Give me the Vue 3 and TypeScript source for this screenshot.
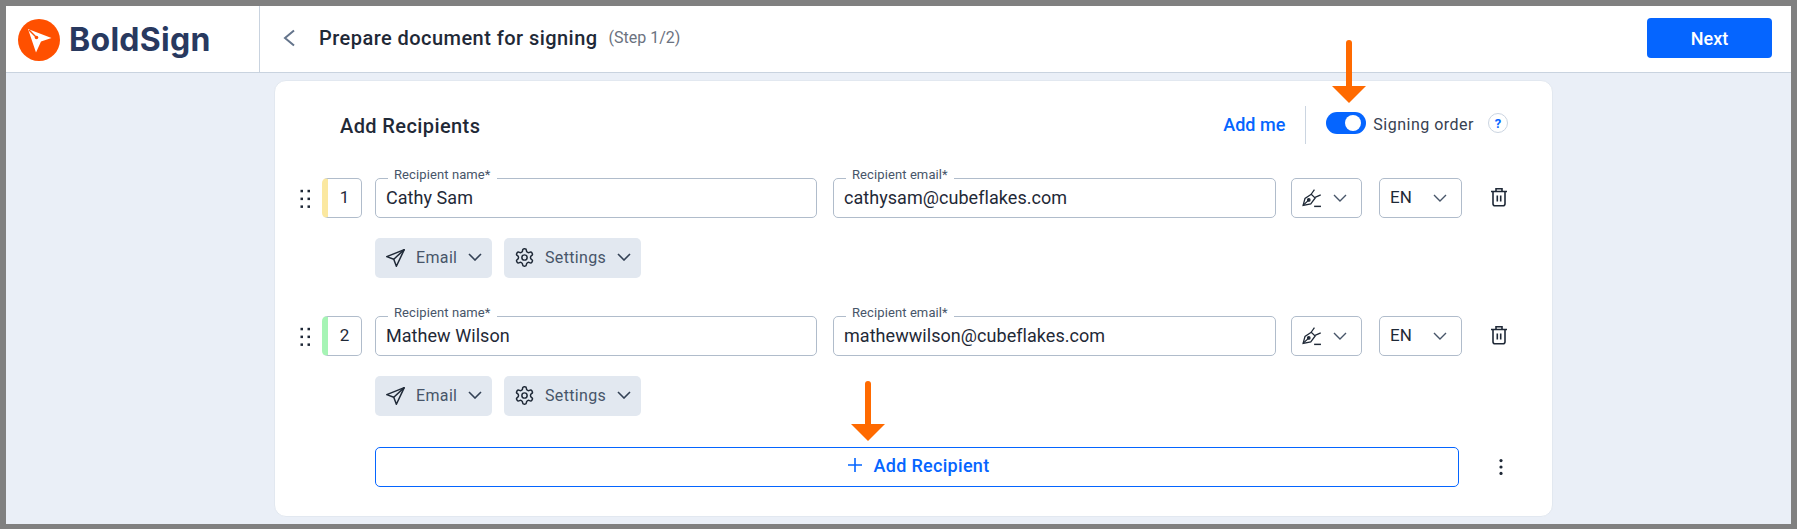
<script setup lang="ts">
interface Recipient {
  order: number
  name: string
  email: string
  accent: string
}

const recipients: Recipient[] = [
  { order: 1, name: 'Cathy Sam', email: 'cathysam@cubeflakes.com', accent: '#fbe8a0' },
  { order: 2, name: 'Mathew Wilson', email: 'mathewwilson@cubeflakes.com', accent: '#a6f4b5' },
]
const gearPath =
  'M12.22 2h-.44a2 2 0 0 0-2 2v.18a2 2 0 0 1-1 1.73l-.43.25a2 2 0 0 1-2 0l-.15-.08a2 2 0 0 0-2.73.73l-.22.38a2 2 0 0 0 .73 2.73l.15.1a2 2 0 0 1 1 1.72v.51a2 2 0 0 1-1 1.74l-.15.09a2 2 0 0 0-.73 2.73l.22.38a2 2 0 0 0 2.73.73l.15-.08a2 2 0 0 1 2 0l.43.25a2 2 0 0 1 1 1.73V20a2 2 0 0 0 2 2h.44a2 2 0 0 0 2-2v-.18a2 2 0 0 1 1-1.73l.43-.25a2 2 0 0 1 2 0l.15.08a2 2 0 0 0 2.73-.73l.22-.39a2 2 0 0 0-.73-2.73l-.15-.08a2 2 0 0 1-1-1.74v-.5a2 2 0 0 1 1-1.74l.15-.09a2 2 0 0 0 .73-2.73l-.22-.38a2 2 0 0 0-2.73-.73l-.15.08a2 2 0 0 1-2 0l-.43-.25a2 2 0 0 1-1-1.73V4a2 2 0 0 0-2-2z'
</script>

<template>
  <div class="frame">
    <header class="topbar">
      <div class="brand">
        <svg class="logo" width="42" height="42" viewBox="0 0 42 42">
          <circle cx="21" cy="21" r="21" fill="#ff5000" />
          <path d="M10 10 33.5 19 23 22.5 18 33.5Z" fill="#fff" />
          <path d="M11 11 18 18" stroke="#ff5000" stroke-width="1.4" />
          <circle cx="18.5" cy="18.5" r="1.8" fill="#ff5000" />
        </svg>
        <span class="wordmark">BoldSign</span>
      </div>
      <div class="title-area">
        <svg class="back" width="14" height="18" viewBox="0 0 14 18" fill="none">
          <path d="M12 1.5 3 9l9 7.5" stroke="#64748b" stroke-width="2" />
        </svg>
        <h1 class="title">Prepare document for signing</h1>
        <span class="step">(Step 1/2)</span>
      </div>
      <button class="next">Next</button>
    </header>

    <main class="content">
      <section class="card">
        <div class="card-head">
          <h2 class="card-title">Add Recipients</h2>
          <a class="add-me">Add me</a>
          <span class="divider"></span>
          <span class="toggle"><span class="knob"></span></span>
          <span class="order-label">Signing order</span>
          <span class="help">?</span>
        </div>

        <div v-for="r in recipients" :key="r.order" class="recipient">
          <div class="row">
            <svg class="drag" width="10" height="20" viewBox="0 0 10 20">
              <g fill="#1f2937">
                <rect x="0.5" y="1.8" width="2.5" height="2.5" />
                <rect x="7.5" y="1.8" width="2.5" height="2.5" />
                <rect x="0.5" y="9.6" width="2.5" height="2.5" />
                <rect x="7.5" y="9.6" width="2.5" height="2.5" />
                <rect x="0.5" y="17.4" width="2.5" height="2.5" />
                <rect x="7.5" y="17.4" width="2.5" height="2.5" />
              </g>
            </svg>
            <div class="num" :style="{ borderLeftColor: r.accent }">{{ r.order }}</div>
            <label class="field name-field">
              <span class="legend">Recipient name*</span>
              <span class="value">{{ r.name }}</span>
            </label>
            <label class="field email-field">
              <span class="legend">Recipient email*</span>
              <span class="value">{{ r.email }}</span>
            </label>
            <div class="select sign">
              <svg width="21" height="21" viewBox="0 0 20 20" fill="none" stroke="#1f2937" stroke-width="1.2">
                <path d="M2 16.5 3.8 10 9.8 6l3.7 3.5-4.2 5.6z" />
                <path d="M2 16.5 6.8 12" />
                <circle cx="7.4" cy="11.4" r="1.2" fill="#1f2937" />
                <path d="M9.5 6.2 12.8 1.5M13.4 9l5.4-2.4" />
                <path d="M12.5 17.5h6.5" stroke-width="1.4" />
              </svg>
              <svg class="chev" width="14" height="8" viewBox="0 0 14 8" fill="none">
                <path d="m1 1 6 6 6-6" stroke="#475569" stroke-width="1.4" />
              </svg>
            </div>
            <div class="select lang">
              <span class="lang-text">EN</span>
              <svg class="chev" width="14" height="8" viewBox="0 0 14 8" fill="none">
                <path d="m1 1 6 6 6-6" stroke="#475569" stroke-width="1.4" />
              </svg>
            </div>
            <svg class="trash" width="18" height="20" viewBox="0 0 18 20" fill="none" stroke="#1f2937" stroke-width="1.6">
              <path d="M1 4.5h16M6 4.5V1.8h6v2.7" />
              <path d="M3 4.5v12.2a2 2 0 0 0 2 2h8a2 2 0 0 0 2-2V4.5" />
              <path d="M7.3 8.5v6M10.7 8.5v6" />
            </svg>
          </div>
          <div class="chips">
            <button class="chip email-chip">
              <svg width="21" height="21" viewBox="0 0 24 24" fill="none" stroke="#1f2937" stroke-width="1.7" stroke-linejoin="round">
                <path d="M22 3 2 11l8 3 3 8z" />
                <path d="M22 3 10 14" />
              </svg>
              <span class="chip-text">Email</span>
              <svg width="14" height="8" viewBox="0 0 14 8" fill="none">
                <path d="m1 1 6 6 6-6" stroke="#334155" stroke-width="1.6" />
              </svg>
            </button>
            <button class="chip settings-chip">
              <svg width="21" height="21" viewBox="0 0 24 24" fill="none" stroke="#1f2937" stroke-width="1.7">
                <path :d="gearPath" />
                <circle cx="12" cy="12" r="3" />
              </svg>
              <span class="chip-text">Settings</span>
              <svg width="14" height="8" viewBox="0 0 14 8" fill="none">
                <path d="m1 1 6 6 6-6" stroke="#334155" stroke-width="1.6" />
              </svg>
            </button>
          </div>
        </div>

        <div class="add-row">
          <button class="add-recipient">
            <svg width="16" height="16" viewBox="0 0 16 16" fill="none">
              <path d="M8 1v14M1 8h14" stroke="#0565ff" stroke-width="1.6" />
            </svg>
            <span>Add Recipient</span>
          </button>
          <svg class="more" width="4" height="16" viewBox="0 0 4 16">
            <g fill="#1f2937">
              <circle cx="2" cy="1.6" r="1.6" />
              <circle cx="2" cy="8" r="1.6" />
              <circle cx="2" cy="14.4" r="1.6" />
            </g>
          </svg>
        </div>
      </section>
    </main>

    <svg class="arrow arrow-toggle" width="34" height="63" viewBox="0 0 34 63">
      <path d="M17 3v44" stroke="#ff6a00" stroke-width="6" stroke-linecap="round" />
      <path d="M0 46h34L17 63z" fill="#ff6a00" />
    </svg>
    <svg class="arrow arrow-add" width="34" height="60" viewBox="0 0 34 60">
      <path d="M17 3v41" stroke="#ff6a00" stroke-width="6" stroke-linecap="round" />
      <path d="M0 43h34L17 60z" fill="#ff6a00" />
    </svg>
  </div>
</template>

<style scoped>
.frame {
  position: relative;
  box-sizing: border-box;
  width: 1797px;
  height: 529px;
  border: solid #808080;
  border-width: 6px 6px 5px 6px;
  background: #eaeff7;
  font-family: Roboto, "Liberation Sans", sans-serif;
  color: #1f2937;
  overflow: hidden;
}
.topbar {
  display: flex;
  align-items: center;
  height: 66px;
  background: #fff;
  border-bottom: 1px solid #c9d3df;
}
.brand {
  display: flex;
  align-items: center;
  gap: 9px;
  box-sizing: border-box;
  width: 254px;
  height: 100%;
  padding-left: 12px;
  border-right: 1px solid #c9d3df;
}
.logo {
  margin-top: 2px;
}
.wordmark {
  font-family: Inter, "Liberation Sans", sans-serif;
  font-size: 32px;
  font-weight: 700;
  letter-spacing: 0.3px;
  color: #28395f;
}
.title-area {
  display: flex;
  align-items: center;
  flex: 1;
  height: 100%;
  box-sizing: border-box;
  padding: 0 0 3px 22px;
}
.back {
  margin-right: 23px;
}
.title {
  margin: 0;
  font-size: 20px;
  font-weight: 500;
  letter-spacing: 0.45px;
  color: #1f2937;
}
.step {
  margin-left: 11px;
  font-size: 16px;
  color: #6b7280;
}
.next {
  width: 125px;
  height: 40px;
  margin: 0 19px 2px 0;
  padding-bottom: 1px;
  border: 0;
  border-radius: 4px;
  background: #0565ff;
  color: #fff;
  font: 500 18px Roboto, sans-serif;
}
.content {
  padding: 7px 0 0 268px;
}
.card {
  box-sizing: border-box;
  width: 1279px;
  height: 437px;
  padding-top: 25px;
  background: #fff;
  border: 1px solid #e2e8f0;
  border-radius: 12px;
}
.card-head {
  display: flex;
  align-items: center;
  height: 38px;
  padding-left: 65px;
}
.card-title {
  flex: 1;
  margin: 1px 0 0;
  font-size: 20px;
  font-weight: 500;
  letter-spacing: 0.4px;
  color: #1f2937;
}
.add-me {
  margin-bottom: 2px;
  color: #0565ff;
  font-size: 18px;
  font-weight: 500;
}
.divider {
  width: 1px;
  height: 38px;
  margin: 0 20px 0 20px;
  background: #cbd5e1;
}
.toggle {
  position: relative;
  width: 40px;
  height: 22px;
  margin-bottom: 4px;
  border-radius: 11px;
  background: #0565ff;
}
.knob {
  position: absolute;
  top: 3px;
  right: 5px;
  width: 16px;
  height: 16px;
  border-radius: 50%;
  background: #fff;
}
.order-label {
  margin: 0 0 2px 7px;
  font-size: 16px;
  letter-spacing: 0.5px;
  color: #374151;
}
.help {
  display: flex;
  align-items: center;
  justify-content: center;
  box-sizing: border-box;
  width: 20px;
  height: 20px;
  margin: 0 44px 4px 14px;
  border: 1px solid #cbd5e1;
  border-radius: 50%;
  color: #0565ff;
  font-size: 13px;
  font-weight: 700;
}
.recipient {
  margin-bottom: 38px;
}
.row {
  display: flex;
  align-items: center;
  height: 40px;
  margin-top: 34px;
  padding-left: 25px;
}
.recipient + .recipient .row {
  margin-top: 0;
}
.drag {
  margin-right: 12px;
}
.num {
  box-sizing: border-box;
  display: flex;
  align-items: center;
  justify-content: center;
  width: 40px;
  height: 40px;
  padding-bottom: 2px;
  border: 1px solid #b0bccb;
  border-left: 6px solid;
  border-radius: 5px;
  font-size: 17px;
  color: #1f2937;
}
.field {
  position: relative;
  box-sizing: border-box;
  display: flex;
  align-items: center;
  height: 40px;
  padding: 0 0 2px 10px;
  border: 1px solid #b0bccb;
  border-radius: 5px;
}
.name-field {
  width: 442px;
  margin-left: 13px;
}
.email-field {
  width: 443px;
  margin-left: 16px;
}
.legend {
  position: absolute;
  top: -11px;
  left: 12px;
  padding: 0 6px;
  background: #fff;
  font-size: 13px;
  line-height: 14px;
  letter-spacing: 0.1px;
  color: #475569;
}
.value {
  font-size: 18px;
  letter-spacing: 0.05px;
  color: #1f2937;
}
.select {
  box-sizing: border-box;
  display: flex;
  align-items: center;
  justify-content: space-between;
  height: 40px;
  border: 1px solid #b0bccb;
  border-radius: 5px;
}
.sign {
  width: 71px;
  margin-left: 15px;
  padding: 0 14px 0 9px;
}
.lang {
  width: 83px;
  margin-left: 17px;
  padding: 0 14px 0 10px;
  font-size: 17px;
  color: #1f2937;
}
.lang-text {
  margin-bottom: 2px;
}
.trash {
  margin: 0 0 2px 28px;
}
.chips {
  display: flex;
  gap: 12px;
  margin: 20px 0 0 100px;
}
.chip {
  display: flex;
  align-items: center;
  box-sizing: border-box;
  height: 40px;
  padding: 0 0 2px 10px;
  border: 0;
  border-radius: 5px;
  background: #e2e8f0;
  color: #475569;
  font: 400 16px Roboto, sans-serif;
  letter-spacing: 0.35px;
}
.chip-text {
  margin: 0 11px 0 10px;
}
.email-chip {
  width: 117px;
}
.settings-chip {
  width: 137px;
}
.add-row {
  display: flex;
  align-items: center;
  margin: -7px 0 0 100px;
}
.add-recipient {
  display: flex;
  align-items: center;
  justify-content: center;
  gap: 11px;
  box-sizing: border-box;
  width: 1084px;
  height: 40px;
  padding: 0 0 4px 2px;
  border: 1px solid #0565ff;
  border-radius: 5px;
  background: #fff;
  color: #0565ff;
  font: 500 18px Roboto, sans-serif;
  letter-spacing: 0.3px;
}
.more {
  margin-left: 40px;
}
.arrow {
  position: absolute;
}
.arrow-toggle {
  top: 34px;
  left: 1326px;
}
.arrow-add {
  top: 375px;
  left: 845px;
}
</style>
